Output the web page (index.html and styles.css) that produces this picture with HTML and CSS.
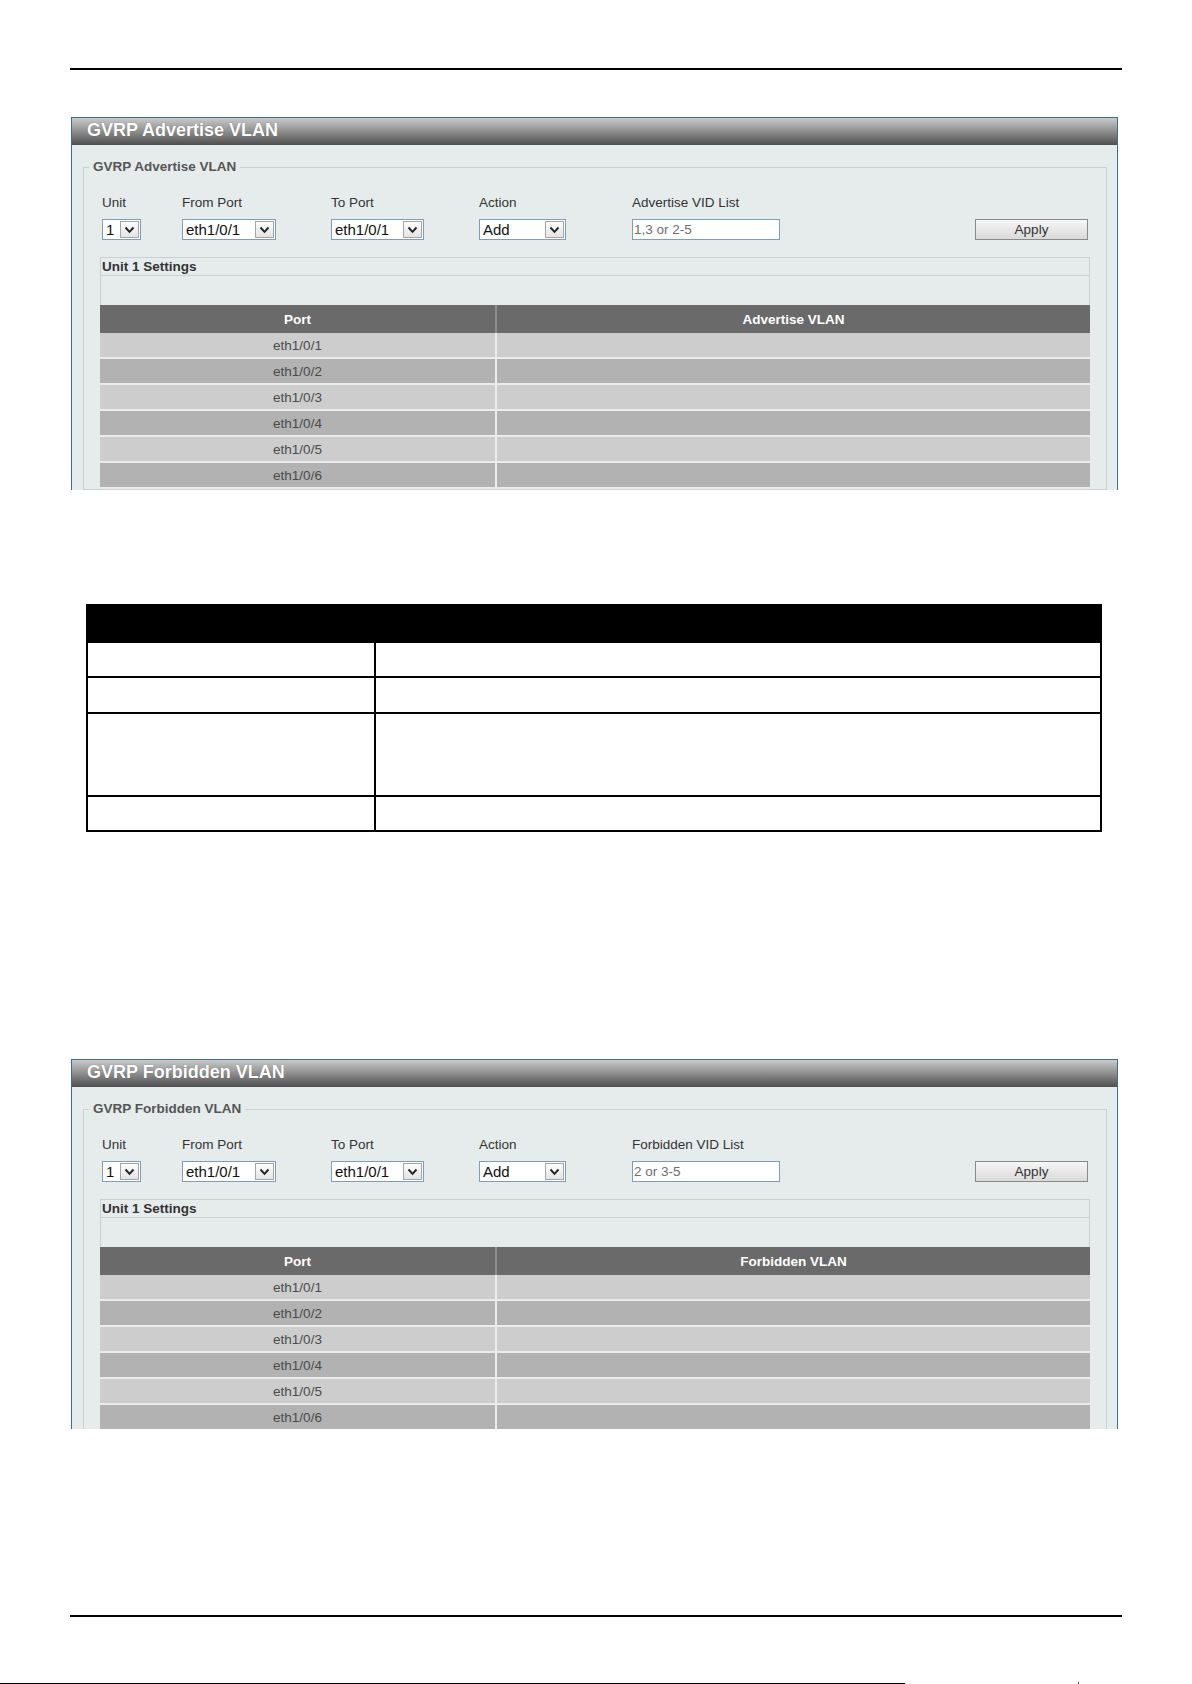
FILE: index.html
```html
<!DOCTYPE html>
<html lang="en">
<head>
  <meta charset="UTF-8" />
  <title>GVRP VLAN Settings</title>
  <link rel="stylesheet" href="styles.css">
</head>
<body>
  <div class="page">
    <div class="rule"></div>

    <!-- GVRP Advertise VLAN -->
    <div class="panel panel-adv">
      <div class="panel-title">GVRP Advertise VLAN</div>
      <fieldset class="group">
        <legend>GVRP Advertise VLAN</legend>
        <div class="form-row">
          <div class="field">
            <label>Unit</label>
            <div class="select s-unit"><span class="value">1</span><span class="arrow"><svg width="11" height="8" viewBox="0 0 11 8"><path d="M1.5 1.5 L5.5 5.8 L9.5 1.5" fill="none" stroke="#222" stroke-width="1.9"/></svg></span></div>
          </div>
          <div class="field">
            <label>From Port</label>
            <div class="select s-port"><span class="value">eth1/0/1</span><span class="arrow"><svg width="11" height="8" viewBox="0 0 11 8"><path d="M1.5 1.5 L5.5 5.8 L9.5 1.5" fill="none" stroke="#222" stroke-width="1.9"/></svg></span></div>
          </div>
          <div class="field">
            <label>To Port</label>
            <div class="select s-port s-to"><span class="value">eth1/0/1</span><span class="arrow"><svg width="11" height="8" viewBox="0 0 11 8"><path d="M1.5 1.5 L5.5 5.8 L9.5 1.5" fill="none" stroke="#222" stroke-width="1.9"/></svg></span></div>
          </div>
          <div class="field">
            <label>Action</label>
            <div class="select s-action"><span class="value">Add</span><span class="arrow"><svg width="11" height="8" viewBox="0 0 11 8"><path d="M1.5 1.5 L5.5 5.8 L9.5 1.5" fill="none" stroke="#222" stroke-width="1.9"/></svg></span></div>
          </div>
          <div class="field">
            <label>Advertise VID List</label>
            <input class="vid" type="text" placeholder="1,3 or 2-5">
          </div>
          <div class="field field-btn">
            <button class="apply">Apply</button>
          </div>
        </div>

        <div class="settings">
          <div class="settings-title">Unit 1 Settings</div>
          <div class="settings-blank"></div>
          <table class="ports">
            <tr><th class="col-port">Port</th><th>Advertise VLAN</th></tr>
            <tr class="odd"><td>eth1/0/1</td><td></td></tr>
            <tr class="even"><td>eth1/0/2</td><td></td></tr>
            <tr class="odd"><td>eth1/0/3</td><td></td></tr>
            <tr class="even"><td>eth1/0/4</td><td></td></tr>
            <tr class="odd"><td>eth1/0/5</td><td></td></tr>
            <tr class="even"><td>eth1/0/6</td><td></td></tr>
          </table>
        </div>
      </fieldset>
    </div>

    <table class="params">
      <tr class="p-head"><th class="p-name"></th><th></th></tr>
      <tr class="p-row"><td></td><td></td></tr>
      <tr class="p-row p-row2"><td></td><td></td></tr>
      <tr class="p-tall"><td></td><td></td></tr>
      <tr class="p-row"><td></td><td></td></tr>
    </table>

    <!-- GVRP Forbidden VLAN -->
    <div class="panel panel-forb">
      <div class="panel-title">GVRP Forbidden VLAN</div>
      <fieldset class="group">
        <legend>GVRP Forbidden VLAN</legend>
        <div class="form-row">
          <div class="field">
            <label>Unit</label>
            <div class="select s-unit"><span class="value">1</span><span class="arrow"><svg width="11" height="8" viewBox="0 0 11 8"><path d="M1.5 1.5 L5.5 5.8 L9.5 1.5" fill="none" stroke="#222" stroke-width="1.9"/></svg></span></div>
          </div>
          <div class="field">
            <label>From Port</label>
            <div class="select s-port"><span class="value">eth1/0/1</span><span class="arrow"><svg width="11" height="8" viewBox="0 0 11 8"><path d="M1.5 1.5 L5.5 5.8 L9.5 1.5" fill="none" stroke="#222" stroke-width="1.9"/></svg></span></div>
          </div>
          <div class="field">
            <label>To Port</label>
            <div class="select s-port s-to"><span class="value">eth1/0/1</span><span class="arrow"><svg width="11" height="8" viewBox="0 0 11 8"><path d="M1.5 1.5 L5.5 5.8 L9.5 1.5" fill="none" stroke="#222" stroke-width="1.9"/></svg></span></div>
          </div>
          <div class="field">
            <label>Action</label>
            <div class="select s-action"><span class="value">Add</span><span class="arrow"><svg width="11" height="8" viewBox="0 0 11 8"><path d="M1.5 1.5 L5.5 5.8 L9.5 1.5" fill="none" stroke="#222" stroke-width="1.9"/></svg></span></div>
          </div>
          <div class="field">
            <label>Forbidden VID List</label>
            <input class="vid" type="text" placeholder="2 or 3-5">
          </div>
          <div class="field field-btn">
            <button class="apply">Apply</button>
          </div>
        </div>

        <div class="settings">
          <div class="settings-title">Unit 1 Settings</div>
          <div class="settings-blank"></div>
          <table class="ports">
            <tr><th class="col-port">Port</th><th>Forbidden VLAN</th></tr>
            <tr class="odd"><td>eth1/0/1</td><td></td></tr>
            <tr class="even"><td>eth1/0/2</td><td></td></tr>
            <tr class="odd"><td>eth1/0/3</td><td></td></tr>
            <tr class="even"><td>eth1/0/4</td><td></td></tr>
            <tr class="odd"><td>eth1/0/5</td><td></td></tr>
            <tr class="even"><td>eth1/0/6</td><td></td></tr>
          </table>
        </div>
      </fieldset>
    </div>

    <div class="rule rule-bottom"></div>
  </div>

  <div class="footer">
    <div class="footer-line"></div>
    <div class="footer-mark"></div>
  </div>
</body>
</html>
```

FILE: styles.css
```css
body {
  margin: 0;
  background: #fff;
  font-family: "Liberation Sans", Arial, sans-serif;
  color: #333;
}
.page {
  padding-left: 70px;
  padding-top: 68px;
  width: 1052px;
}
.rule {
  height: 2px;
  background: #000;
}
.rule-bottom {
  margin-top: 186px;
}

/* panel window */
.panel {
  box-sizing: border-box;
  margin-left: 1px;
  width: 1047px;
  background: #e6ecec;
  border: 1px solid #3b6e95;
  border-bottom: none;
  overflow: hidden;
}
.panel-adv {
  margin-top: 47px;
  height: 373px;
}
.panel-forb {
  margin-top: 227px;
  height: 370px;
}
.panel-title {
  height: 27px;
  line-height: 24px;
  padding-left: 15px;
  font-size: 18px;
  font-weight: bold;
  color: #fff;
  background: linear-gradient(#cacaca, #9a9a9a 40%, #4f4f4f);
  text-shadow: 0 0 1px rgba(0,0,0,0.4);
}

.group {
  margin: 14px 10px 0 11px;
  padding: 20px 16px 0 16px;
  border: 1px solid #c9d1d1;
  min-width: 0;
}
.group legend {
  margin-left: -11px;
  padding: 0 4px;
  font-size: 13.5px;
  line-height: 16px;
  font-weight: bold;
  color: #555;
}

/* form row */
.form-row {
  display: grid;
  grid-template-columns: 80px 149px 148px 153px 1fr 113px;
  padding: 0 2px;
  align-items: end;
}
.field label {
  display: block;
  font-size: 13.5px;
  line-height: 16px;
  margin-bottom: 8px;
  color: #333;
}
.select {
  box-sizing: border-box;
  height: 21px;
  display: flex;
  align-items: center;
  background: #fff;
  border: 1px solid #7f9db9;
}
.select .value {
  flex: 1;
  padding-left: 3px;
  font-size: 15px;
  color: #111;
}
.select .arrow {
  box-sizing: border-box;
  width: 19px;
  height: 17px;
  margin-right: 1px;
  display: flex;
  align-items: center;
  justify-content: center;
  border: 1px solid #a5a5a5;
  background: linear-gradient(#fdfdfd, #e4e4e4);
}
.s-unit { width: 39px; }
.s-port { width: 94px; }
.s-to { width: 93px; }
.s-action { width: 87px; }
.vid {
  box-sizing: border-box;
  width: 148px;
  height: 21px;
  margin: 0;
  padding: 0 1px;
  border: 1px solid #7f9db9;
  background: #fff;
  font-family: "Liberation Sans", Arial, sans-serif;
  font-size: 13.5px;
}
.vid::placeholder {
  color: #6e6e6e;
}
.apply {
  box-sizing: border-box;
  width: 113px;
  height: 21px;
  padding: 0;
  border: 1px solid #8a8a8a;
  background: linear-gradient(#f6f6f6, #dadada);
  font-family: "Liberation Sans", Arial, sans-serif;
  font-size: 13.5px;
  color: #333;
}

/* unit settings block */
.settings {
  margin-top: 17px;
}
.settings-title {
  height: 17px;
  line-height: 17px;
  padding-left: 1px;
  font-size: 13.5px;
  font-weight: bold;
  color: #333;
  border: 1px solid #cad1d1;
}
.settings-blank {
  height: 29px;
  border-left: 1px solid #cad1d1;
  border-right: 1px solid #cad1d1;
}
.ports {
  width: 100%;
  border-collapse: collapse;
  font-size: 13.5px;
}
.ports th {
  height: 28px;
  padding: 0;
  background: #6a6a6a;
  color: #fff;
  font-weight: bold;
}
.ports th + th {
  border-left: 2px solid #8e8e8e;
}
.col-port {
  width: 395px;
}
.ports td {
  height: 24px;
  padding: 0;
  text-align: center;
  color: #4b4b4b;
  border-bottom: 2px solid #ececec;
}
.ports td + td {
  border-left: 2px solid #ececec;
}
.ports .odd td { background: #cdcdcd; }
.ports .even td { background: #b2b2b2; }

/* parameter table */
.params {
  margin-top: 114px;
  margin-left: 16px;
  width: 1016px;
  border-collapse: collapse;
}
.params th,
.params td {
  padding: 0;
  border: 2px solid #000;
}
.params th {
  background: #000;
}
.p-name {
  width: 286px;
}
.p-head { height: 37px; }
.p-row { height: 35px; }
.p-row2 { height: 36px; }
.p-tall { height: 83px; }

/* page footer */
.footer {
  margin-top: 65px;
  display: flex;
  align-items: flex-end;
}
.footer-line {
  width: 905px;
  height: 1px;
  background: #000;
}
.footer-mark {
  margin-left: 173px;
  width: 1px;
  height: 2px;
  background: #555;
}
```
